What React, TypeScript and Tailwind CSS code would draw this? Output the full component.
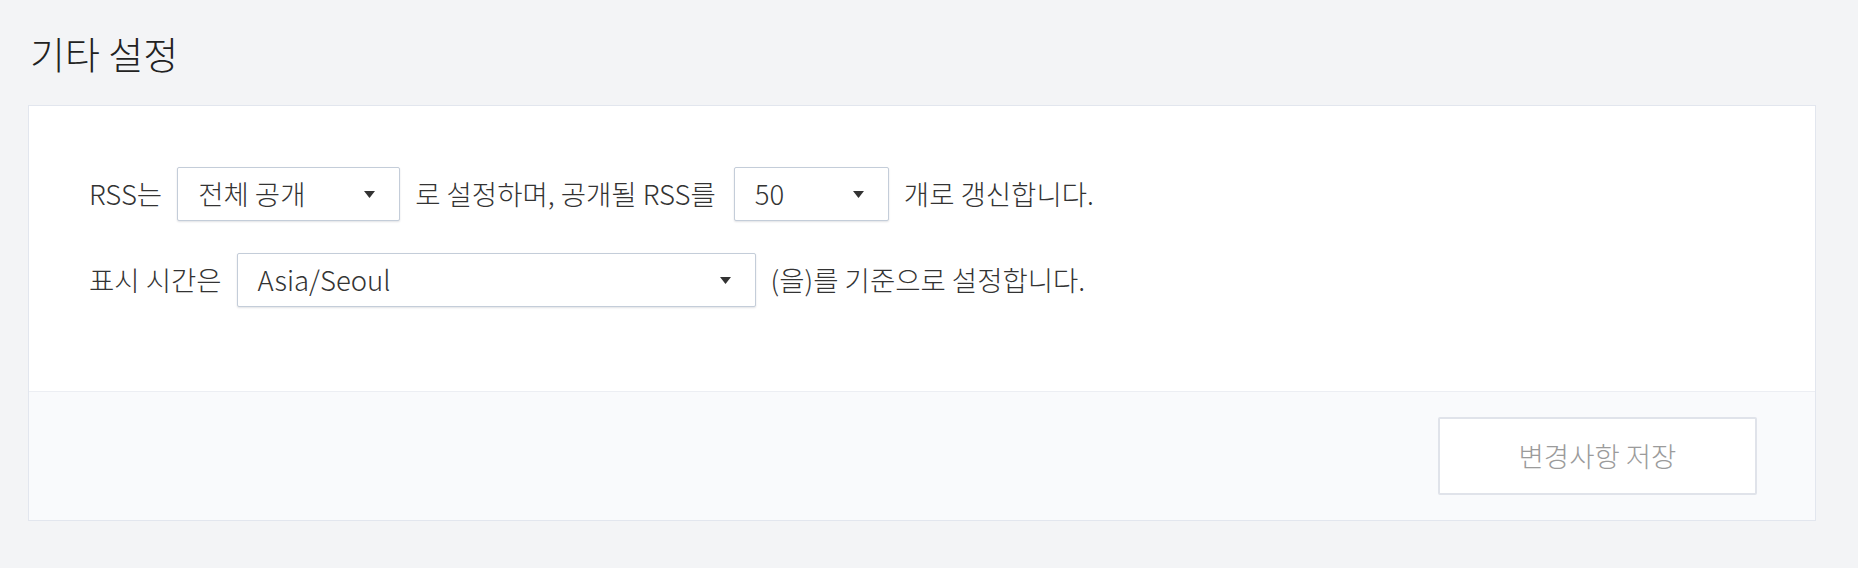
import React from 'react';

function Caret() {
  return (
    <svg width="11" height="7" viewBox="0 0 11 7" className="shrink-0">
      <path d="M0 0 L11 0 L5.5 7 Z" fill="#333" />
    </svg>
  );
}

function Dropdown({ value, width }: { value: string; width: string }) {
  return (
    <div
      className={`${width} mr-[15px] flex h-[54px] shrink-0 items-center justify-between rounded-[2px] border-[1.5px] border-[#c4cdd9] bg-white pl-[20px] pr-[24px] shadow-[0_1px_2px_rgba(40,50,70,0.14)]`}
    >
      <span>{value}</span>
      <Caret />
    </div>
  );
}

export default function App() {
  return (
    <div className="min-h-[568px] bg-[#f3f4f6] pt-[34px] font-['Noto_Sans_CJK_KR','Noto_Sans',sans-serif] font-light text-[#333]">
      <h2 className="ml-[30px] text-[38px] leading-none text-[#222]">기타 설정</h2>

      <div className="ml-[28px] mt-[33px] w-[1788px] border-[1.5px] border-[#e2e6ee] bg-white">
        {/* settings */}
        <div className="flex h-[285px] flex-col gap-[32px] pl-[60px] pt-[61px] text-[27.5px]">
          <div className="flex items-center">
            <span className="mr-[15px]">RSS는</span>
            <Dropdown value="전체 공개" width="w-[223px]" />
            <span className="mr-[18px]">로 설정하며, 공개될 RSS를</span>
            <Dropdown value="50" width="w-[155px]" />
            <span>개로 갱신합니다.</span>
          </div>
          <div className="flex items-center">
            <span className="mr-[15px]">표시 시간은</span>
            <Dropdown value="Asia/Seoul" width="w-[519px]" />
            <span>(을)를 기준으로 설정합니다.</span>
          </div>
        </div>

        {/* footer */}
        <div className="flex justify-end border-t-[1.5px] border-[#eceef3] bg-[#f9fafc] py-[25px] pr-[58px]">
          <button className="h-[78px] w-[319px] rounded-[2px] border-2 border-[#e0e3ea] bg-white text-[27.5px] text-[#9b9b9b]">
            변경사항 저장
          </button>
        </div>
      </div>
    </div>
  );
}
